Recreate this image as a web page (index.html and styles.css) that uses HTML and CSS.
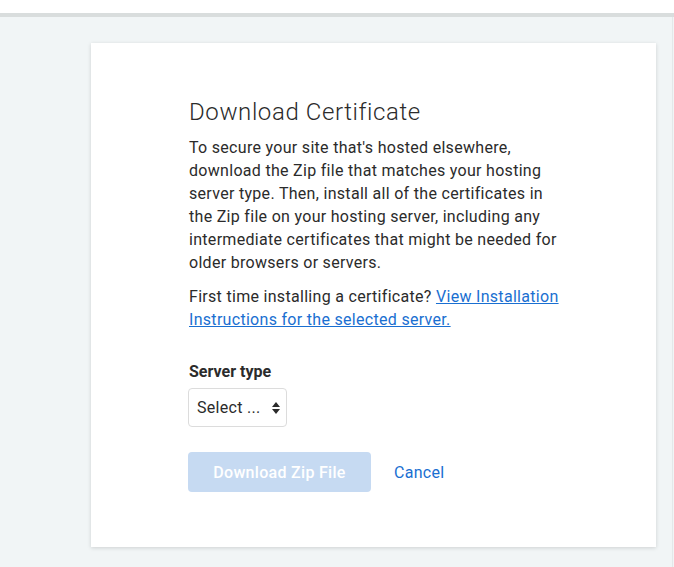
FILE: index.html
```html
<!DOCTYPE html>
<html>
<head>
<meta charset="utf-8">
<link rel="stylesheet" href="styles.css">
</head>
<body>
<div class="topbar"></div>
<main class="page">
  <section class="card">
    <div class="content">
      <h1 class="title">Download Certificate</h1>
      <p class="text">To secure your site that's hosted elsewhere, download the Zip file that matches your hosting server type. Then, install all of the certificates in the Zip file on your hosting server, including any intermediate certificates that might be needed for older browsers or servers.</p>
      <p class="text">First time installing a certificate? <a class="link" href="#">View Installation Instructions for the selected server.</a></p>
      <label class="label">Server type</label>
      <div class="select">
        <span>Select ...</span>
        <svg class="arrows" width="8" height="12" viewBox="0 0 8 12"><path d="M4 0L8 5H0z M4 12L0 7H8z" fill="#2b2b2b"/></svg>
      </div>
      <div class="actions">
        <button class="btn" disabled>Download Zip File</button>
        <a class="cancel" href="#">Cancel</a>
      </div>
    </div>
  </section>
  <div class="edge"></div>
</main>
</body>
</html>
```
FILE: styles.css
```css
* { box-sizing: border-box; }
html, body { margin: 0; padding: 0; }
body {
  font-family: Roboto, "Liberation Sans", sans-serif;
  color: #2b2b2b;
  background: #f1f5f6;
  height: 567px;
  overflow: hidden;
  letter-spacing: 0.3px;
}
.topbar {
  height: 17px;
  background: #fff;
  border-bottom: 4px solid #d9dddd;
}
.page {
  position: relative;
  padding: 26px 18px 0 91px;
}
.card {
  background: #fff;
  width: 565px;
  height: 504px;
  box-shadow: 0 1px 4px rgba(0,0,0,0.15);
  padding: 54px 0 0 97px;
}
.content { width: 376px; }
.title {
  margin: 0 0 9px 1px;
  font-size: 24px;
  font-weight: 300;
  line-height: 30px;
  letter-spacing: 0.6px;
}
.text {
  margin: 0 0 11px 1px;
  font-size: 16px;
  line-height: 23px;
}
.link { color: #1a6fd1; text-decoration: underline; }
.label {
  display: block;
  margin: 30px 0 0 1px;
  font-size: 16px;
  font-weight: 700;
  line-height: 22px;
  letter-spacing: 0;
}
.select {
  margin-top: 5px;
  width: 99px;
  height: 39px;
  border: 1px solid #dcdcdc;
  border-radius: 4px;
  display: flex;
  align-items: center;
  justify-content: space-between;
  padding: 0 6px 0 8px;
  font-size: 16px;
}
.actions {
  margin-top: 25px;
  display: flex;
  align-items: center;
  gap: 23px;
}
.btn {
  width: 183px;
  height: 40px;
  border: none;
  border-radius: 4px;
  background: #c6daf2;
  color: #fff;
  font-family: inherit;
  font-size: 16px;
  font-weight: 500;
  letter-spacing: 0.3px;
}
.cancel { color: #1a6fd1; text-decoration: none; font-size: 16px; }
.edge {
  position: absolute;
  right: 1px;
  top: 0;
  width: 1px;
  height: 550px;
  background: #e4e8e9;
}
```
